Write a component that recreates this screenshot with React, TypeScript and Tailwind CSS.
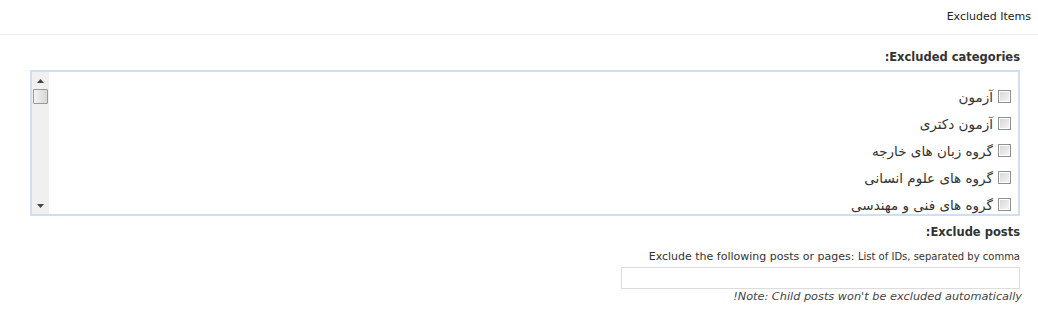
import React from "react";

const cats = [
  "آزمون",
  "آزمون دکتری",
  "گروه زبان های خارجه",
  "گروه های علوم انسانی",
  "گروه های فنی و مهندسی",
];

function Checkbox() {
  return (
    <span className="inline-block w-[13px] h-[13px] border border-[#8e8f8f] p-[1px] bg-white shrink-0">
      <span className="block w-full h-full bg-gradient-to-br from-[#d8d8d8] to-[#f4f4f4]" />
    </span>
  );
}

export default function App() {
  return (
    <div
      dir="rtl"
      className="w-[1038px] h-[313px] bg-white text-[#222] font-['Tahoma','DejaVu_Sans',sans-serif] text-[11px] overflow-hidden"
    >
      <div className="h-[35px] flex items-center pr-[7px] border-b border-[#ececec]">
        <span dir="ltr">Excluded Items</span>
      </div>
      <div className="pr-[18px] pl-[30px]">
        <div className="mt-[14px] h-[16px] leading-[16px] font-bold text-[11.5px] text-[#333]">
          Excluded categories:
        </div>
        <div className="mt-[5px] h-[146px] border-2 border-[#cddff0] flex">
          <div className="flex-1 pt-[11px] pr-[7px]">
            {cats.map((c) => (
              <div key={c} className="h-[27px] flex items-center gap-[5px] text-[#333]">
                <Checkbox />
                <span className="font-['DejaVu_Sans',sans-serif] text-[13.5px] leading-[16px]">{c}</span>
              </div>
            ))}
          </div>
          <div className="w-[17px] bg-[#f0f0f0] flex flex-col items-center">
            <div className="h-[17px] flex items-center justify-center">
              <svg width="7" height="4" viewBox="0 0 7 4">
                <path d="M3.5 0 L7 4 L0 4 Z" fill="#444" />
              </svg>
            </div>
            <div className="w-[15px] h-[15px] border border-[#9a9a9a] rounded-[1px] bg-gradient-to-r from-[#f3f3f3] to-[#d6d6d6]" />
            <div className="flex-1" />
            <div className="h-[17px] flex items-center justify-center">
              <svg width="7" height="4" viewBox="0 0 7 4">
                <path d="M0 0 L7 0 L3.5 4 Z" fill="#444" />
              </svg>
            </div>
          </div>
        </div>
        <div className="mt-[8px] h-[16px] leading-[16px] font-bold text-[11.5px] text-[#333]">
          Exclude posts:
        </div>
        <div className="mt-[9px] h-[16px] leading-[16px] text-[#333]">
          <span dir="ltr">
            Exclude the following posts or pages: <span className="text-[10px]">List of IDs, separated by comma</span>
          </span>
        </div>
        <div className="mt-[2px] flex">
          <div className="w-[399px] h-[22px] border border-[#dcdcdc] bg-white" />
        </div>
        <div className="h-[16px] leading-[16px] italic text-[11.3px] text-[#444] -ml-[2px] -mr-[2px]">
          Note: Child posts won't be excluded automatically!
        </div>
      </div>
    </div>
  );
}
